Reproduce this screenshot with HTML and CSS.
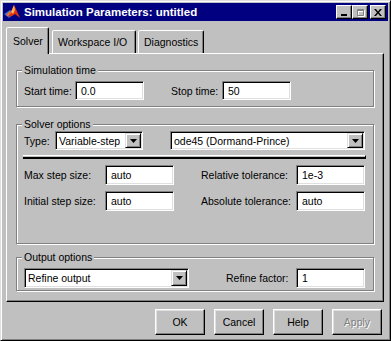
FILE: index.html
```html
<!DOCTYPE html>
<html>
<head>
<meta charset="utf-8">
<link rel="stylesheet" href="styles.css">
</head>
<body>
<div class="window">
  <div class="titlebar">
    <svg class="app-icon" width="16" height="16" viewBox="0 0 16 16">
      <polygon points="0,10 6,6 11,9 5,14" fill="#3a6ad0"/>
      <polygon points="4,13 7,8 10,1 12,5 16,14 11,10 8,12" fill="#e03010"/>
      <polygon points="7,8 10,1 11,6 9,10" fill="#ffb050"/>
      <polygon points="2,11 6,7 7,9 4,12" fill="#f07030"/>
    </svg>
    <span class="title">Simulation Parameters: untitled</span>
    <div class="wbtns">
      <div class="wbtn"><svg width="8" height="7" viewBox="0 0 8 7"><rect x="1" y="5" width="6" height="2" fill="#000"/></svg></div>
      <div class="wbtn"><svg width="9" height="9" viewBox="0 0 9 9"><path d="M1.5 1.5h6v6h-6z M1.5 2.5h6" stroke="#fff" fill="none" transform="translate(1,1)"/><path d="M1.5 1.5h6v6h-6z M1.5 2.5h6" stroke="#808080" fill="none"/></svg></div>
      <div class="wbtn close"><svg width="8" height="7" viewBox="0 0 8 7"><path d="M0 0h2l2 2.5 2-2.5h2l-3 3.5 3 3.5h-2l-2-2.5-2 2.5h-2l3-3.5z" fill="#000"/></svg></div>
    </div>
  </div>
  <div class="body">
    <div class="tabs">
      <div class="tab active">Solver</div>
      <div class="tab ws">Workspace I/O</div>
      <div class="tab dg">Diagnostics</div>
    </div>
    <div class="panel">
      <div class="group g1">
        <span class="gtitle">Simulation time</span>
        <div class="row r-time">
          <span>Start time:</span>
          <div class="field">0.0</div>
          <span></span>
          <span>Stop time:</span>
          <div class="field">50</div>
        </div>
      </div>
      <div class="group g2">
        <span class="gtitle">Solver options</span>
        <div class="row r-type">
          <span>Type:</span>
          <div class="select"><span class="val">Variable-step</span><span class="arrow"><svg width="7" height="4" viewBox="0 0 7 4"><polygon points="0,0 7,0 3.5,4" fill="#000"/></svg></span></div>
          <span></span>
          <div class="select"><span class="val">ode45 (Dormand-Prince)</span><span class="arrow"><svg width="7" height="4" viewBox="0 0 7 4"><polygon points="0,0 7,0 3.5,4" fill="#000"/></svg></span></div>
        </div>
        <div class="sep"></div>
        <div class="row r-step">
          <span>Max step size:</span>
          <div class="field tall">auto</div>
          <span></span>
          <span>Relative tolerance:</span>
          <div class="field tall">1e-3</div>
        </div>
        <div class="row r-step">
          <span>Initial step size:</span>
          <div class="field tall">auto</div>
          <span></span>
          <span>Absolute tolerance:</span>
          <div class="field tall">auto</div>
        </div>
      </div>
      <div class="group g3">
        <span class="gtitle">Output options</span>
        <div class="row r-out">
          <div class="select tall"><span class="val">Refine output</span><span class="arrow"><svg width="7" height="4" viewBox="0 0 7 4"><polygon points="0,0 7,0 3.5,4" fill="#000"/></svg></span></div>
          <span></span>
          <span>Refine factor:</span>
          <div class="field tall">1</div>
        </div>
      </div>
    </div>
    <div class="buttons">
      <div class="btn">OK</div>
      <div class="btn">Cancel</div>
      <div class="btn">Help</div>
      <div class="btn disabled">Apply</div>
    </div>
  </div>
</div>
</body>
</html>
```
FILE: styles.css
```css
* { box-sizing: border-box; }
body {
  margin: 0;
  background: #c0c0c0;
  font-family: "Liberation Sans", Arial, sans-serif;
  font-size: 10.5px;
  color: #000;
}
.window {
  width: 391px;
  height: 341px;
  border: 1px solid;
  border-color: #dfdfdf #000 #000 #dfdfdf;
  box-shadow: inset 1px 1px #fff, inset -1px -1px #808080;
  padding: 2px;
  display: flex;
  flex-direction: column;
  background: #c0c0c0;
}
.titlebar {
  height: 18px;
  background: #000080;
  display: flex;
  align-items: center;
  padding: 0 2px 0 1px;
  color: #fff;
  font-weight: bold;
  font-size: 11.5px;
}
.app-icon { flex: none; }
.title { margin-left: 4px; }
.wbtns { margin-left: auto; display: flex; }
.wbtn {
  width: 16px;
  height: 14px;
  background: #c0c0c0;
  border: 1px solid;
  border-color: #fff #000 #000 #fff;
  box-shadow: inset -1px -1px #808080;
  display: flex;
  align-items: center;
  justify-content: center;
}
.wbtn.close { margin-left: 2px; }
.body {
  flex: 1;
  display: flex;
  flex-direction: column;
  padding: 6px 4px 0 3px;
}
.tabs {
  height: 26px;
  display: flex;
  align-items: flex-end;
  position: relative;
  z-index: 1;
}
.tab {
  height: 23px;
  border: 1px solid;
  border-bottom: none;
  border-color: #fff #000 transparent #fff;
  box-shadow: inset -1px 0 #808080;
  border-radius: 2px 2px 0 0;
  display: flex;
  align-items: center;
  padding: 0 5px;
  background: #c0c0c0;
}
.tab.active {
  height: 27px;
  margin-bottom: -1px;
  width: 43px;
  padding: 0 6px;
}
.tab.ws { width: 84px; margin-left: 3px; }
.tab.dg { width: 66px; margin-left: 2px; }
.panel {
  width: 378px;
  border: 1px solid;
  border-color: #fff #000 #000 #fff;
  box-shadow: inset -1px -1px #808080;
  padding: 16px 9px 10px 9px;
  display: flex;
  flex-direction: column;
}
.group {
  border: 1px solid #808080;
  box-shadow: inset 1px 1px #fff, 1px 1px #fff;
  display: flex;
  flex-direction: column;
  padding: 0 7px 6px 7px;
}
.gtitle {
  align-self: flex-start;
  margin: -7px 0 0 -2px;
  padding: 0 2px;
  line-height: 12px;
  background: #c0c0c0;
}
.g2 { margin-top: 17px; padding-bottom: 32px; }
.g3 { margin-top: 13px; padding-bottom: 2px; }
.row {
  display: grid;
  align-items: center;
  white-space: nowrap;
}
.r-time { margin-top: 5px; grid-template-columns: 51px 69px 27px 51px 69px; }
.r-type { margin-top: 1px; grid-template-columns: 31px 88px 27px 195px; }
.r-step { margin-top: 6px; grid-template-columns: 81px 69px 27px 95px 69px; }
.r-out { margin-top: 5px; grid-template-columns: 165px 37px 70px 69px; }
.field {
  height: 19px;
  background: #fff;
  border: 1px solid;
  border-color: #808080 #fff #fff #808080;
  box-shadow: inset 1px 1px #000, inset -1px -1px #dfdfdf;
  padding-left: 5px;
  display: flex;
  align-items: center;
}
.field.tall { height: 20px; }
.select {
  height: 19px;
  background: #fff;
  border: 1px solid;
  border-color: #808080 #fff #fff #808080;
  box-shadow: inset 1px 1px #000, inset -1px -1px #dfdfdf;
  padding: 1px;
  display: flex;
  align-items: stretch;
}
.select.tall { height: 20px; }
.select .val {
  flex: 1;
  padding-left: 2px;
  display: flex;
  align-items: center;
}
.select .arrow {
  width: 16px;
  background: #c0c0c0;
  border: 1px solid;
  border-color: #dfdfdf #000 #000 #dfdfdf;
  box-shadow: inset 1px 1px #fff, inset -1px -1px #808080;
  display: flex;
  align-items: center;
  justify-content: center;
}
.sep {
  margin: 5px 0 0 -1px;
  height: 4px;
  border-top: 1px solid #fff;
  border-bottom: 2px solid #000;
  border-right: 1px solid #000;
}
.buttons {
  margin-top: 7px;
  display: flex;
  justify-content: flex-end;
  gap: 9px;
  padding-right: 2px;
}
.btn {
  width: 50px;
  height: 26px;
  border: 1px solid;
  border-color: #fff #000 #000 #fff;
  box-shadow: inset -1px -1px #808080, inset 1px 1px #dfdfdf;
  display: flex;
  align-items: center;
  justify-content: center;
}
.btn.disabled {
  color: #808080;
  text-shadow: 1px 1px #fff;
}
```
